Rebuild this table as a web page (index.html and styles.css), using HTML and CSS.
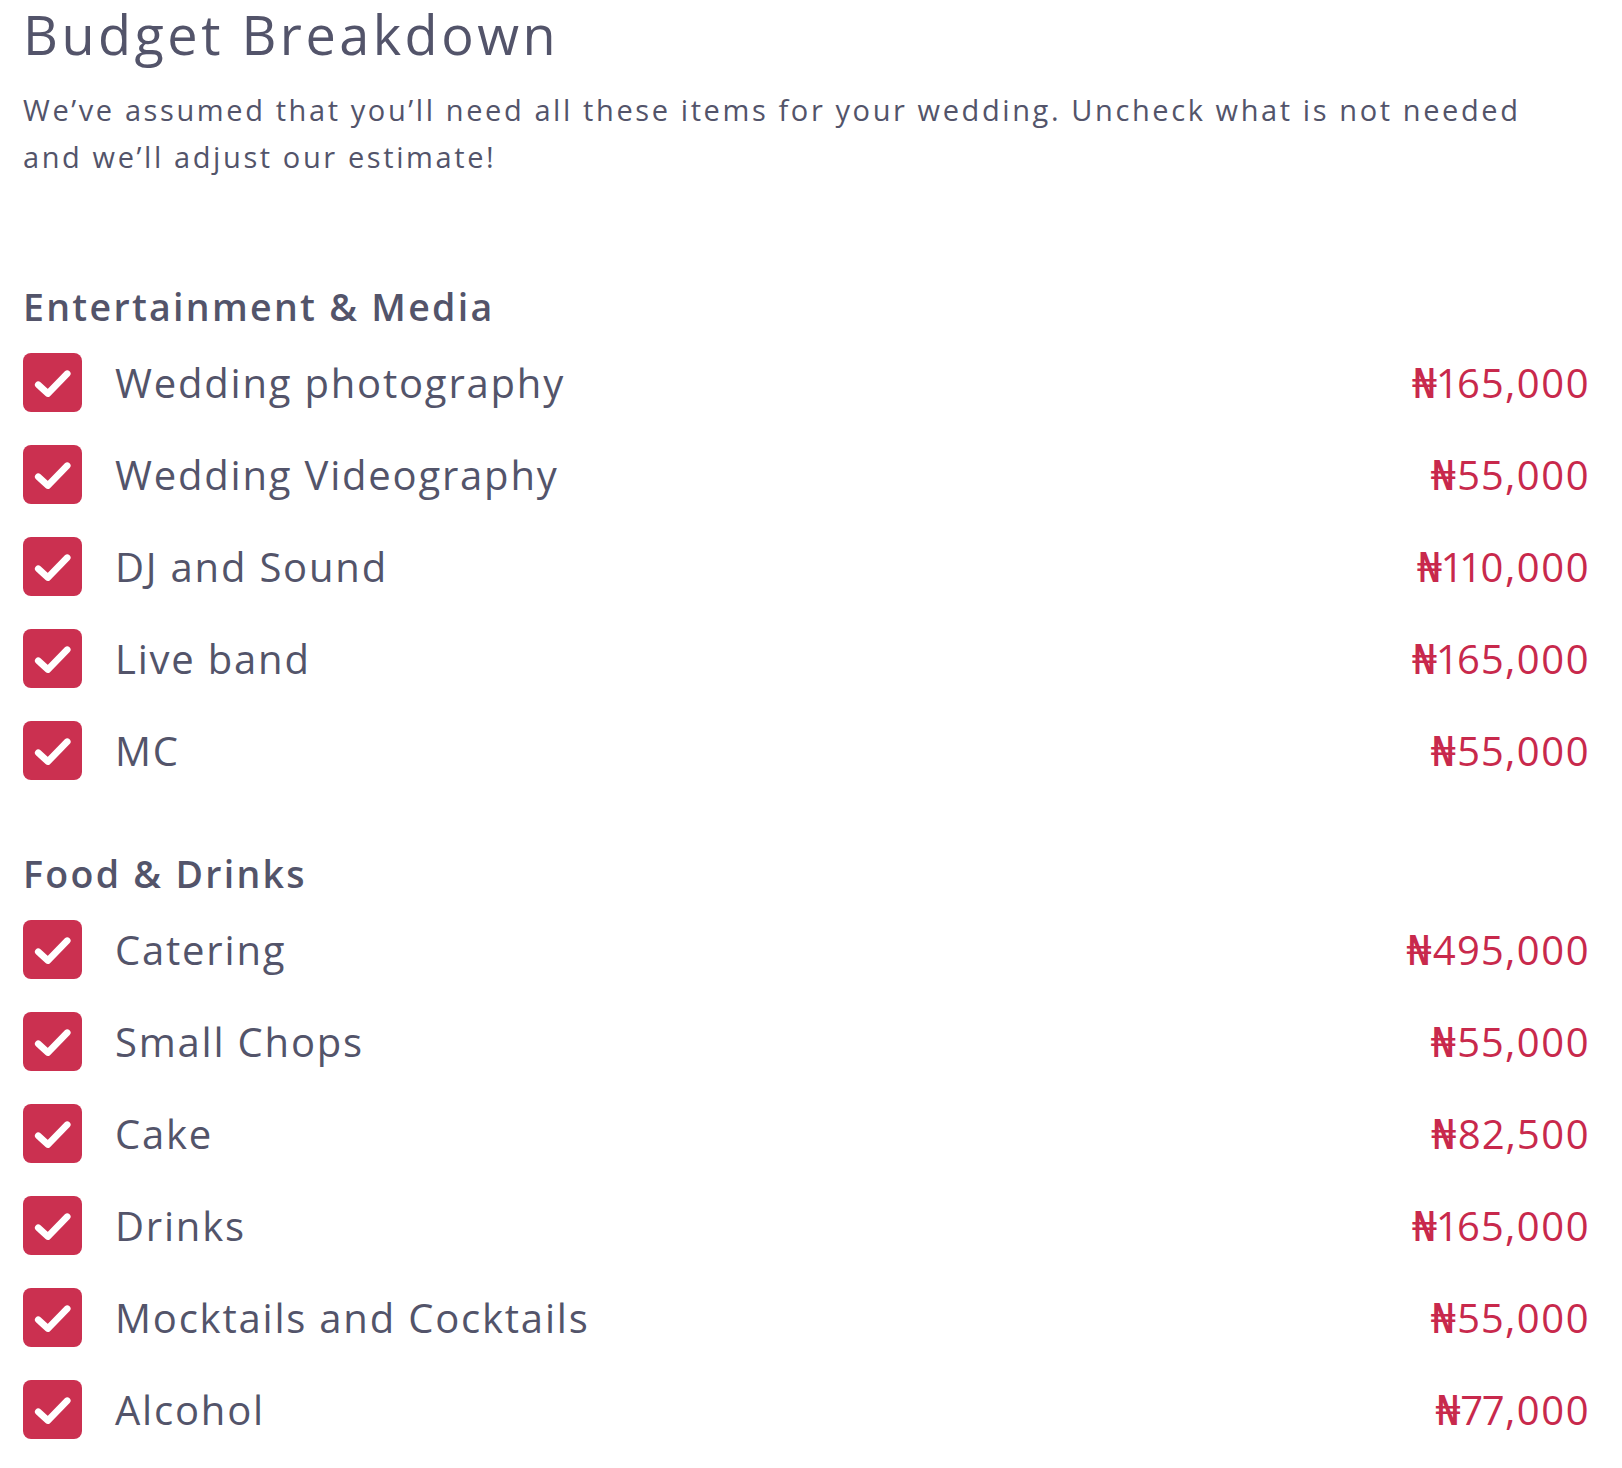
FILE: index.html
```html
<!DOCTYPE html>
<html lang="en">
<head>
<meta charset="utf-8">
<title>Budget Breakdown</title>
<link rel="stylesheet" href="styles.css">
</head>
<body>
<main class="page">
  <h1 class="title">Budget Breakdown</h1>
  <p class="intro">We’ve assumed that you’ll need all these items for your wedding. Uncheck what is not needed and we’ll adjust our estimate!</p>

  <section class="group">
    <h2 class="group-title">Entertainment &amp; Media</h2>
    <ul class="items">
      <li class="item"><span class="check"><svg viewBox="0 0 24 24"><path d="M6.2 12.9 L10.1 16.5 L18 8.4"/></svg></span><span class="label">Wedding photography</span><span class="price">₦165,000</span></li>
      <li class="item"><span class="check"><svg viewBox="0 0 24 24"><path d="M6.2 12.9 L10.1 16.5 L18 8.4"/></svg></span><span class="label">Wedding Videography</span><span class="price">₦55,000</span></li>
      <li class="item"><span class="check"><svg viewBox="0 0 24 24"><path d="M6.2 12.9 L10.1 16.5 L18 8.4"/></svg></span><span class="label">DJ and Sound</span><span class="price">₦110,000</span></li>
      <li class="item"><span class="check"><svg viewBox="0 0 24 24"><path d="M6.2 12.9 L10.1 16.5 L18 8.4"/></svg></span><span class="label">Live band</span><span class="price">₦165,000</span></li>
      <li class="item"><span class="check"><svg viewBox="0 0 24 24"><path d="M6.2 12.9 L10.1 16.5 L18 8.4"/></svg></span><span class="label">MC</span><span class="price">₦55,000</span></li>
    </ul>
  </section>

  <section class="group">
    <h2 class="group-title">Food &amp; Drinks</h2>
    <ul class="items">
      <li class="item"><span class="check"><svg viewBox="0 0 24 24"><path d="M6.2 12.9 L10.1 16.5 L18 8.4"/></svg></span><span class="label">Catering</span><span class="price">₦495,000</span></li>
      <li class="item"><span class="check"><svg viewBox="0 0 24 24"><path d="M6.2 12.9 L10.1 16.5 L18 8.4"/></svg></span><span class="label">Small Chops</span><span class="price">₦55,000</span></li>
      <li class="item"><span class="check"><svg viewBox="0 0 24 24"><path d="M6.2 12.9 L10.1 16.5 L18 8.4"/></svg></span><span class="label">Cake</span><span class="price">₦82,500</span></li>
      <li class="item"><span class="check"><svg viewBox="0 0 24 24"><path d="M6.2 12.9 L10.1 16.5 L18 8.4"/></svg></span><span class="label">Drinks</span><span class="price">₦165,000</span></li>
      <li class="item"><span class="check"><svg viewBox="0 0 24 24"><path d="M6.2 12.9 L10.1 16.5 L18 8.4"/></svg></span><span class="label">Mocktails and Cocktails</span><span class="price">₦55,000</span></li>
      <li class="item"><span class="check"><svg viewBox="0 0 24 24"><path d="M6.2 12.9 L10.1 16.5 L18 8.4"/></svg></span><span class="label">Alcohol</span><span class="price">₦77,000</span></li>
    </ul>
  </section>
</main>
</body>
</html>
```

FILE: styles.css
```css
html, body {
  margin: 0;
  padding: 0;
  background: #ffffff;
}

body {
  font-family: "Open Sans", "DejaVu Sans", sans-serif;
  color: #53546a;
}

.page {
  padding: 2px 34px 20px 23px;
}

.title {
  margin: 0;
  font-size: 54px;
  font-weight: 500;
  line-height: 64px;
  letter-spacing: 3.5px;
  color: #53546a;
}

.intro {
  margin: 21px 0 0;
  max-width: 1540px;
  font-size: 29px;
  font-weight: 400;
  line-height: 46.5px;
  letter-spacing: 2.6px;
}

.group {
  margin-top: 70px;
}

.group:first-of-type {
  margin-top: 103px;
}

.group-title {
  margin: 0 0 22px;
  font-size: 37.5px;
  font-weight: 600;
  line-height: 48px;
  letter-spacing: 2.3px;
  color: #53546a;
}

.items {
  list-style: none;
  margin: 0;
  padding: 0;
  display: flex;
  flex-direction: column;
  gap: 33px;
}

.item {
  display: flex;
  align-items: center;
  height: 59px;
}

.check {
  flex: 0 0 59px;
  width: 59px;
  height: 59px;
  border-radius: 8px;
  background: #cb3050;
  display: flex;
  align-items: center;
  justify-content: center;
}

.check svg {
  width: 59px;
  height: 59px;
  fill: none;
  stroke: #ffffff;
  stroke-width: 2.7;
  stroke-linecap: round;
  stroke-linejoin: round;
}

.label {
  margin-left: 33px;
  flex: 1;
  font-size: 40px;
  line-height: 59px;
  letter-spacing: 1.8px;
  color: #53546a;
}

.price {
  margin-right: -2px;
  font-size: 40px;
  line-height: 59px;
  letter-spacing: 1.2px;
  font-variant-numeric: proportional-nums;
  color: #c8294c;
}
```
